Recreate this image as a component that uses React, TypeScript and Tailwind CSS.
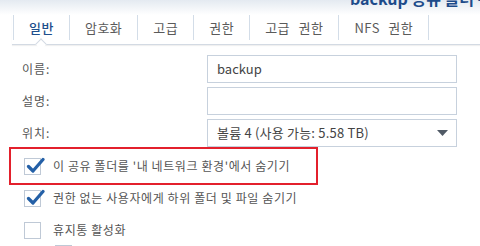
const tabs = ["일반", "암호화", "고급", "권한", "고급 권한", "NFS 권한"];

const CheckIcon = () => (
  <svg
    className="absolute left-[1px] top-[-2px]"
    width="19"
    height="18"
    viewBox="0 0 19 18"
    fill="none"
  >
    <path
      d="M2.5 9.5 L7 14 L17 2.5"
      stroke="#2460a7"
      strokeWidth="3.2"
      strokeLinecap="round"
      strokeLinejoin="round"
    />
  </svg>
);

const Checkbox = ({ checked }: { checked?: boolean }) => (
  <div className="relative size-[17px] shrink-0 border border-[#bfc9d6] bg-white">
    {checked && <CheckIcon />}
  </div>
);

const FormRow = ({ label, children }: { label: string; children: React.ReactNode }) => (
  <div className="flex h-[28px] items-center">
    <div className="w-[207px] pl-[22px] text-[12px] tracking-[1px] text-[#555]">{label}</div>
    {children}
  </div>
);

export default function App() {
  return (
    <div
      className="h-[246px] w-[480px] overflow-hidden bg-white"
      style={{ fontFamily: '"Noto Sans CJK KR", "Noto Sans", sans-serif' }}
    >
      {/* HEADER */}
      <div className="h-[15px] overflow-hidden bg-gradient-to-b from-[#e4eaf1] to-white">
        <div className="-mt-[12px] pl-[350px] text-[16px] font-bold leading-[20px] text-[#1d4b8a] whitespace-nowrap">
          backup 공유 폴더 편집
        </div>
      </div>

      {/* TABS */}
      <div className="relative ml-[12px] flex h-[30px] items-start border-b border-[#d3dae3] shadow-[0_1px_1px_rgba(0,0,0,0.06)]">
        <div className="ml-[1px] flex h-[25px] border-r border-[#d3dde8]">
          {tabs.map((t, i) => (
            <div
              key={t}
              className={`flex items-center border-l border-[#d3dde8] px-[15px] text-[13px] tracking-[0.5px] [word-spacing:5px] ${
                i === 0 ? "font-medium text-[#1e4f8c]" : "text-[#5a5a5a]"
              }`}
            >
              {t}
            </div>
          ))}
        </div>
        <div className="absolute left-[25px] top-[25px] size-[8px] rotate-45 border-l border-t border-[#d3dae3] bg-white" />
      </div>

      {/* FORM */}
      <div className="mt-[10px] flex flex-col gap-[4px]">
        <FormRow label="이름:">
          <div className="flex h-[28px] w-[250px] items-center border border-[#c7d1dd] px-[9px] text-[13px] text-[#444]">
            backup
          </div>
        </FormRow>
        <FormRow label="설명:">
          <div className="h-[28px] w-[250px] border border-[#c7d1dd]" />
        </FormRow>
        <FormRow label="위치:">
          <div className="flex h-[28px] w-[250px] items-center justify-between border border-[#c7d1dd] pl-[9px] pr-[8px] text-[13px] tracking-[0.2px] text-[#444]">
            <span>볼륨 4 (사용 가능: 5.58 TB)</span>
            <svg width="11" height="6" viewBox="0 0 11 6">
              <path d="M0 0 H11 L5.5 6 Z" fill="#505a66" />
            </svg>
          </div>
        </FormRow>
      </div>

      {/* OPTIONS */}
      <div className="ml-[9px] flex h-[38px] w-[309px] items-center gap-[12px] border-2 border-[#e3202c] pl-[13px]">
        <Checkbox checked />
        <span className="text-[12px] tracking-[0.6px] text-[#555] whitespace-nowrap">
          이 공유 폴더를 '내 네트워크 환경'에서 숨기기
        </span>
      </div>
      <div className="ml-[24px] mt-[4px] flex flex-col gap-[14px]">
        <div className="flex items-center gap-[12px]">
          <Checkbox checked />
          <span className="text-[12px] tracking-[0.6px] text-[#555] whitespace-nowrap">
            권한 없는 사용자에게 하위 폴더 및 파일 숨기기
          </span>
        </div>
        <div className="flex items-center gap-[12px]">
          <Checkbox />
          <span className="text-[12px] tracking-[0.6px] text-[#555] whitespace-nowrap">휴지통 활성화</span>
        </div>
        <div className="ml-[31px] -mt-[8px] flex items-center gap-[12px]">
          <Checkbox />
        </div>
      </div>
    </div>
  );
}
